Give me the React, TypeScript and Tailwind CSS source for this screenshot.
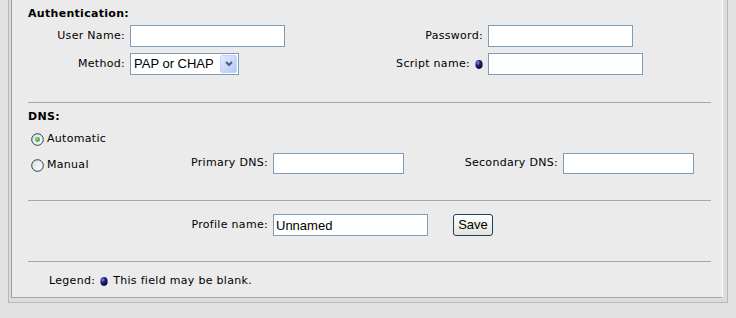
import React from "react"

const Bullet = () => (
  <svg width="8" height="9" viewBox="0 0 8 9" className="inline-block shrink-0">
    <defs>
      <radialGradient id="bl" cx="0.35" cy="0.3" r="0.7">
        <stop offset="0" stopColor="#8c8cf0" />
        <stop offset="0.45" stopColor="#22228c" />
        <stop offset="1" stopColor="#05052e" />
      </radialGradient>
    </defs>
    <ellipse cx="4" cy="4.5" rx="3.6" ry="4.4" fill="url(#bl)" />
  </svg>
)

const Radio = ({ checked }: { checked?: boolean }) => (
  <svg width="13" height="13" viewBox="0 0 13 13" className="shrink-0">
    <defs>
      <linearGradient id="rg" x1="0" y1="0" x2="1" y2="1">
        <stop offset="0" stopColor="#dcdcd4" />
        <stop offset="1" stopColor="#ffffff" />
      </linearGradient>
      <radialGradient id="dot" cx="0.4" cy="0.4" r="0.6">
        <stop offset="0" stopColor="#8fe08f" />
        <stop offset="1" stopColor="#21a121" />
      </radialGradient>
    </defs>
    <circle cx="6.5" cy="6.5" r="5.8" fill="url(#rg)" stroke="#1c3f63" strokeWidth="1" />
    {checked && <circle cx="6.5" cy="6.5" r="2.4" fill="url(#dot)" />}
  </svg>
)

const Field = ({ w, value }: { w: string; value?: string }) => (
  <input
    readOnly
    value={value ?? ""}
    className={`${w} h-full shrink-0 border border-[#7f9db9] bg-white px-[2px] font-['Liberation_Sans'] text-[13px] tracking-normal text-black outline-none`}
  />
)

const Separator = ({ mt }: { mt: string }) => <div className={`${mt} h-px bg-[#aca899]`} />

export default function App() {
  return (
    <div className="w-[736px] h-[318px] overflow-hidden bg-[#e2e2e2] font-['DejaVu_Sans',sans-serif] text-[11px] tracking-[0.3px] text-black">
      <div className="ml-[8px] w-[720px] border-x border-b border-[#b8b8b8] bg-[#dcdcdc] pl-[2px] pr-[4px] pb-[4px]">
        <div className="border-l border-b border-r border-l-[#9a9a9a] border-b-[#a6a6a6] border-r-white bg-[#ebebeb] pl-[16px] pr-[11px] pb-[9px]">
          {/* Authentication */}
          <div className="pt-[7px] leading-[14px] font-bold">Authentication:</div>
          <div className="mt-[4px] flex h-[22px] items-center">
            <span className="w-[97px] text-right">User Name:</span>
            <div className="ml-[5px] h-full flex"><Field w="w-[155px]" /></div>
            <span className="w-[198px] text-right">Password:</span>
            <div className="ml-[5px] h-full flex"><Field w="w-[145px]" /></div>
          </div>
          <div className="mt-[6px] flex h-[22px] items-center">
            <span className="w-[97px] text-right">Method:</span>
            <div className="ml-[5px] flex h-full w-[109px] items-center justify-between border border-[#7f9db9] bg-white pl-[3px] pr-[1px] font-['Liberation_Sans'] text-[13px] tracking-normal text-black">
              <span>PAP or CHAP</span>
              <div className="flex h-[18px] w-[17px] items-center justify-center rounded-[2px] border border-[#c3d3fd] bg-gradient-to-br from-[#e2ebfe] to-[#b3c8f5]">
                <svg width="8" height="6" viewBox="0 0 8 6">
                  <path d="M1 1 L4 4 L7 1" fill="none" stroke="#4d6185" strokeWidth="2" />
                </svg>
              </div>
            </div>
            <span className="flex w-[244px] items-center justify-end gap-[5px]">
              Script name: <Bullet />
            </span>
            <div className="ml-[5px] h-full flex"><Field w="w-[155px]" /></div>
          </div>

          <Separator mt="mt-[27px]" />

          {/* DNS */}
          <div className="mt-[7px] leading-[14px] font-bold">DNS:</div>
          <div className="mt-[7px] flex h-[16px] items-center pl-[3px]">
            <Radio checked />
            <span className="ml-[3px]">Automatic</span>
          </div>
          <div className="mt-[6px] flex h-[21px] items-center">
            <div className="flex w-[240px] items-center justify-between pl-[3px]">
              <span className="mt-[3px] flex items-center">
                <Radio />
                <span className="ml-[3px]">Manual</span>
              </span>
              <span>Primary DNS:</span>
            </div>
            <div className="ml-[5px] h-full flex"><Field w="w-[131px]" /></div>
            <span className="w-[154px] text-right">Secondary DNS:</span>
            <div className="ml-[5px] h-full flex"><Field w="w-[131px]" /></div>
          </div>

          <Separator mt="mt-[26px]" />

          {/* Profile */}
          <div className="mt-[13px] flex h-[22px] items-center">
            <span className="w-[240px] text-right">Profile name:</span>
            <div className="ml-[5px] h-full flex"><Field w="w-[155px]" value={"Un" + "named"} /></div>
            <button className="ml-[25px] h-full w-[40px] rounded-[3px] border border-[#1c3f63] bg-gradient-to-b from-white to-[#e3e2da] font-['Liberation_Sans'] text-[13px] tracking-normal text-black">
              Save
            </button>
          </div>

          <Separator mt="mt-[25px]" />

          {/* Legend */}
          <div className="mt-[12px] flex items-center gap-[5px] pl-[21px] leading-[14px]">
            <span>Legend:</span>
            <Bullet />
            <span>This field may be blank.</span>
          </div>
        </div>
      </div>
    </div>
  )
}
